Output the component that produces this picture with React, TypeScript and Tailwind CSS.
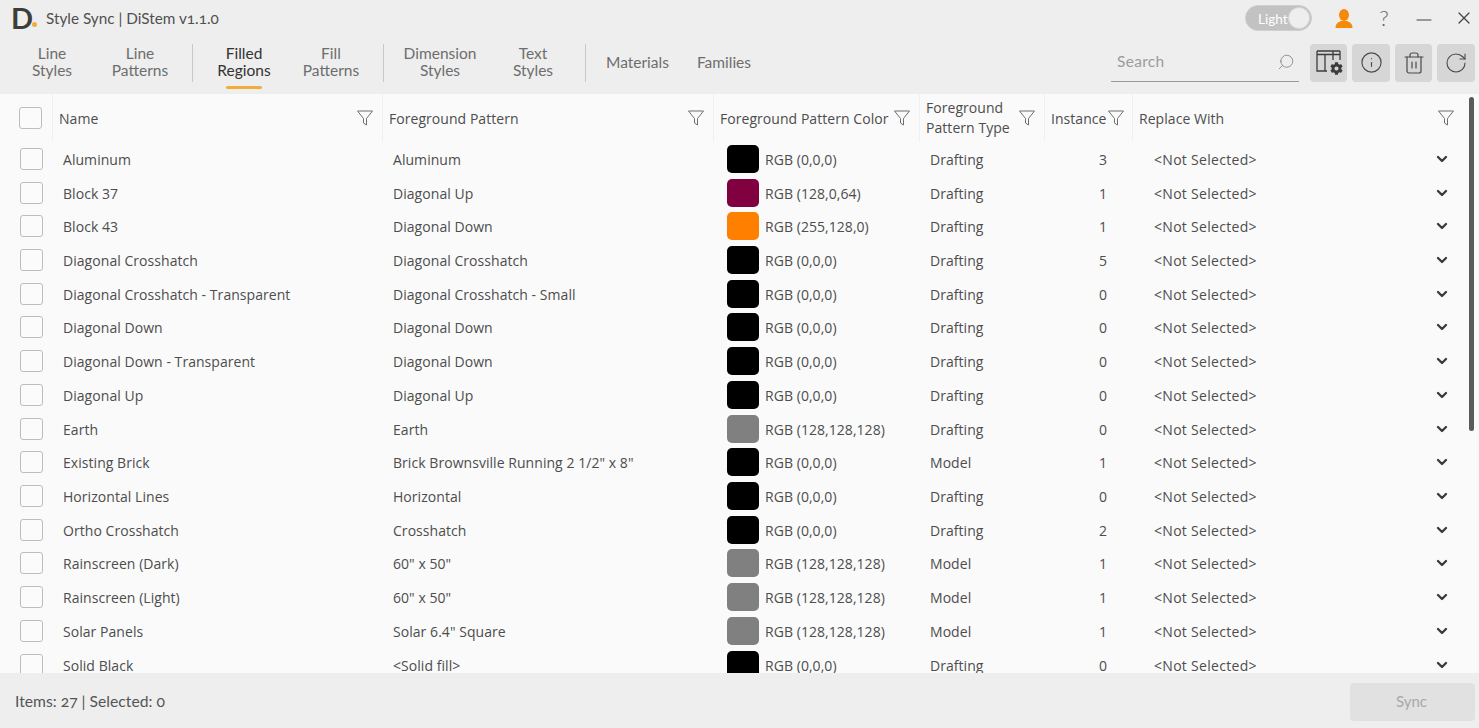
import { ChevronDown, Info, RotateCw, Search, Trash2, X, Minus } from "lucide-react";
import { FaCog } from "react-icons/fa";

const rows = [
  ["Aluminum", "Aluminum", "#000000", "RGB (0,0,0)", "Drafting", 3],
  ["Block 37", "Diagonal Up", "#800040", "RGB (128,0,64)", "Drafting", 1],
  ["Block 43", "Diagonal Down", "#ff8000", "RGB (255,128,0)", "Drafting", 1],
  ["Diagonal Crosshatch", "Diagonal Crosshatch", "#000000", "RGB (0,0,0)", "Drafting", 5],
  ["Diagonal Crosshatch - Transparent", "Diagonal Crosshatch - Small", "#000000", "RGB (0,0,0)", "Drafting", 0],
  ["Diagonal Down", "Diagonal Down", "#000000", "RGB (0,0,0)", "Drafting", 0],
  ["Diagonal Down - Transparent", "Diagonal Down", "#000000", "RGB (0,0,0)", "Drafting", 0],
  ["Diagonal Up", "Diagonal Up", "#000000", "RGB (0,0,0)", "Drafting", 0],
  ["Earth", "Earth", "#808080", "RGB (128,128,128)", "Drafting", 0],
  ["Existing Brick", 'Brick Brownsville Running 2 1/2" x 8"', "#000000", "RGB (0,0,0)", "Model", 1],
  ["Horizontal Lines", "Horizontal", "#000000", "RGB (0,0,0)", "Drafting", 0],
  ["Ortho Crosshatch", "Crosshatch", "#000000", "RGB (0,0,0)", "Drafting", 2],
  ["Rainscreen (Dark)", '60" x 50"', "#808080", "RGB (128,128,128)", "Model", 1],
  ["Rainscreen (Light)", '60" x 50"', "#808080", "RGB (128,128,128)", "Model", 1],
  ["Solar Panels", 'Solar 6.4" Square', "#808080", "RGB (128,128,128)", "Model", 1],
  ["Solid Black", "<Solid fill>", "#000000", "RGB (0,0,0)", "Drafting", 0],
] as const;

const tabs = [
  { lines: ["Line", "Styles"], w: "w-[88px]" },
  { lines: ["Line", "Patterns"], w: "w-[88px]", sep: "ml-[8px]" },
  { lines: ["Filled", "Regions"], w: "w-[102px]", active: true },
  { lines: ["Fill", "Patterns"], w: "w-[72px]", sep: "ml-[16px]" },
  { lines: ["Dimension", "Styles"], w: "w-[112px]" },
  { lines: ["Text", "Styles"], w: "w-[74px]", sep: "ml-[15px]" },
];

function Filter() {
  return (
    <svg width="18" height="18" viewBox="0 0 18 18" fill="none" stroke="#6f6f6f" strokeWidth="1" className="shrink-0">
      <path d="M1.5 2h15l-6 7.5V16l-3-2V9.5z" strokeLinejoin="round" />
    </svg>
  );
}

function Checkbox() {
  return <div className="w-[23px] h-[22px] rounded-[3px] border border-[#bdbdbd] bg-[#fbfbfb]" />;
}

function ColumnsIcon() {
  return (
    <div className="relative w-[26px] h-[25px]">
      <svg width="26" height="25" viewBox="0 0 26 25" fill="none" stroke="#3c3c3c" strokeWidth="1.3">
        <path d="M1 1h23M1 4.5h23M1 1v20h10M9 4.5v16.5M17 1v9M24 1v9" />
      </svg>
      <FaCog size={13} className="absolute right-[-1px] bottom-[0px] text-[#3c3c3c]" />
    </div>
  );
}

function HeaderCell({ className, children }: { className: string; children: React.ReactNode }) {
  return (
    <div className={`flex items-center h-full pl-[6px] border-l border-[#f0f0f0] ${className}`}>{children}</div>
  );
}

export default function App() {
  return (
    <div className="w-[1479px] h-[728px] flex flex-col overflow-hidden bg-[#eeeeee] text-[#4a4a4a] font-['Lato',sans-serif]">
      {/* title bar */}
      <div className="h-9 shrink-0 flex items-center pl-[11px]">
        <div className="w-[35px] flex items-end text-[#3d3d3a] font-bold text-[29px] leading-[22px]">
          D<span className="w-[5px] h-[5px] rounded-full bg-[#f0ad3a] mb-[2px] -ml-[1px]" />
        </div>
        <span className="text-[15.3px] text-[#505050] oldstyle-nums">Style Sync | DiStem v1.1.0</span>
        <div className="ml-auto flex items-center">
          <div className="relative w-[67px] h-[26px] rounded-full bg-[#c2c2c2] border border-[#cfcfcf] mr-[23px]">
            <span className="absolute left-[12px] top-[3px] text-[13.5px] text-white">Light</span>
            <span className="absolute right-[1px] top-[1px] w-[22px] h-[22px] rounded-full bg-[#eeeeee] border border-[#d8d8d8]" />
          </div>
          <svg width="18" height="19" viewBox="0 0 18 19" className="mr-[25px]">
            <ellipse cx="9" cy="6" rx="5" ry="6" fill="#f58a07" />
            <path d="M0.5 19c0-4 2.5-6 5.5-7h6c3 1 5.5 3 5.5 7z" fill="#f58a07" />
          </svg>
          <span className="text-[#666666] text-[22px] font-light w-[12px] text-center leading-none mr-[22px]">?</span>
          <Minus size={24} strokeWidth={1.2} className="text-[#444444] mt-[4px] mr-[18px]" />
          <X size={20} strokeWidth={1.5} className="text-[#444444] mr-[5px]" />
        </div>
      </div>

      {/* toolbar */}
      <div className="h-[58px] shrink-0 flex items-center pl-[8px] pr-[4px] pb-[5px]">
        {tabs.map((t) => (
          <div key={t.lines.join()} className="flex items-center h-full">
            <div className={`relative flex flex-col items-center justify-center h-full pb-[2px] text-[15.5px] leading-[17px] ${t.w} ${t.active ? "text-[#333333]" : "text-[#6d6d6d]"}`}>
              {t.lines.map((l) => (
                <span key={l}>{l}</span>
              ))}
              {t.active && <span className="absolute bottom-0 w-[36px] h-[3.5px] rounded-full bg-[#f0ad3a]" />}
            </div>
            {t.sep && <div className={`w-px h-[38px] bg-[#c8c8c8] ${t.sep}`} />}
          </div>
        ))}
        <span className="ml-5 text-[15.5px] text-[#6d6d6d]">Materials</span>
        <span className="ml-7 text-[15.5px] text-[#6d6d6d]">Families</span>
        <div className="ml-auto mr-[11px] w-[188px] h-[38px] flex items-center justify-between pl-[6px] pr-[4px] border-b-[1.5px] border-[#9a9a9a]">
          <span className="text-[15.5px] tracking-[0.3px] text-[#9b9b9b]">Search</span>
          <Search size={18} strokeWidth={1} className="text-[#777777] -scale-x-100" />
        </div>
        <div className="flex gap-[5px]">
          <div className="w-[37px] h-[38px] rounded-[4px] bg-[#d6d6d6] flex items-center justify-center"><ColumnsIcon /></div>
          <div className="w-[38px] h-[38px] rounded-[4px] bg-[#d6d6d6] flex items-center justify-center"><Info size={23} strokeWidth={1.2} /></div>
          <div className="w-[37px] h-[38px] rounded-[4px] bg-[#d6d6d6] flex items-center justify-center"><Trash2 size={24} strokeWidth={1.2} /></div>
          <div className="w-[38px] h-[38px] rounded-[4px] bg-[#d6d6d6] flex items-center justify-center"><RotateCw size={24} strokeWidth={1.1} /></div>
        </div>
      </div>

      {/* table */}
      <div className="relative flex-1 min-h-0 overflow-hidden bg-[#fafafa] font-['Open_Sans',sans-serif] text-[14px] tracking-[0.05px] text-[#4d4d4d]">
        <div className="flex h-[48px] items-center">
          <div className="w-[52px] shrink-0 pl-[19px]"><Checkbox /></div>
          <HeaderCell className="w-[330px] justify-between pr-[8px]"><span>Name</span><Filter /></HeaderCell>
          <HeaderCell className="w-[331px] justify-between pr-[8px]"><span>Foreground Pattern</span><Filter /></HeaderCell>
          <HeaderCell className="w-[206px] justify-between pr-[8px]"><span>Foreground Pattern Color</span><Filter /></HeaderCell>
          <HeaderCell className="w-[125px] justify-between pr-[8px]"><span className="leading-[20px]">Foreground<br />Pattern Type</span><Filter /></HeaderCell>
          <HeaderCell className="w-[88px] justify-between pr-[8px]"><span>Instance</span><Filter /></HeaderCell>
          <HeaderCell className="w-[330px] justify-between pr-[7px]"><span>Replace With</span><Filter /></HeaderCell>
        </div>
        {rows.map(([name, pattern, color, rgb, type, count]) => (
          <div key={name} className="flex h-[33.73px] items-center">
            <div className="w-[52px] shrink-0 pl-[20px]"><Checkbox /></div>
            <div className="w-[330px] pl-[11px] pt-[1px] truncate">{name}</div>
            <div className="w-[331px] pl-[11px] pt-[1px] truncate">{pattern}</div>
            <div className="w-[206px] pl-[14px] flex items-center gap-[6px]">
              <span className="w-[32px] h-[28px] rounded-[5px]" style={{ backgroundColor: color }} />
              <span className="pt-[1px]">{rgb}</span>
            </div>
            <div className="w-[125px] pl-[11px] pt-[1px]">{type}</div>
            <div className="w-[88px] pr-[25px] pt-[1px] text-right">{count}</div>
            <div className="w-[330px] flex items-center justify-between pl-[22px] pr-[12px]">
              <span className="pt-[1px] tracking-[0.3px]">{"<Not Selected>"}</span>
              <ChevronDown size={16} strokeWidth={3.5} className="text-[#3a3a3a]" />
            </div>
          </div>
        ))}
        <div className="absolute right-[5px] top-[3px] w-[5px] h-[334px] rounded-full bg-[#5a5a5a]" />
      </div>

      {/* footer */}
      <div className="h-[55px] shrink-0 flex items-center justify-between pl-[15px] pr-[4px] pt-[2px]">
        <span className="text-[15.7px] text-[#555555] oldstyle-nums">Items: 27 | Selected: 0</span>
        <div className="w-[125px] h-[38px] pr-[2px] rounded-[4px] bg-[#e1e1e1] flex items-center justify-center text-[15px] text-[#a8a8a8]">Sync</div>
      </div>
    </div>
  );
}
